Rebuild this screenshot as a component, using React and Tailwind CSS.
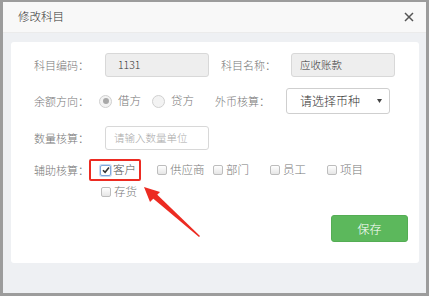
const Checkbox = ({ checked }) =>
  checked ? (
    <span className="w-[11px] h-[11px] flex items-center justify-center border border-[#7fa7dc] rounded-[2px] bg-white shadow-[0_0_0_1px_#c9dbf3]">
      <svg width="8" height="8" viewBox="0 0 8 8">
        <path d="M1 4.2 L3.1 6.3 L7 1.5" fill="none" stroke="#333" strokeWidth="1.6" />
      </svg>
    </span>
  ) : (
    <span className="w-[10px] h-[10px] border border-[#bdbdbd] rounded-[2px] bg-gradient-to-b from-white to-[#e6e6e6]"></span>
  );

const Radio = ({ checked }) => (
  <span className="w-[13px] h-[13px] rounded-full border border-[#d0d0d0] bg-[#f3f3f3] flex items-center justify-center">
    {checked && <span className="w-[6px] h-[6px] rounded-full bg-[#a8a8a8]"></span>}
  </span>
);

const items = ["供应商", "部门", "员工", "项目"];
const itemWidths = ["w-[56px]", "w-[57px]", "w-[57px]", "w-[57px]"];

export default function App() {
  return (
    <div className="relative w-[429px] h-[296px] bg-[#9c9c9c] pl-[3px] pt-[2px] pr-[3px] pb-[3px] font-['Noto_Sans_CJK_SC','Liberation_Sans',sans-serif] font-light overflow-hidden">
      <div className="flex flex-col h-full">
        <div className="h-[31px] shrink-0 flex items-center justify-between pl-[15px] pr-[12px] bg-[#f8f8f8] border-b border-[#ebebeb]">
          <span className="text-[11.5px] text-[#333] leading-none">修改科目</span>
          <svg width="10" height="10" viewBox="0 0 10 10">
            <path d="M1 1 L9 9 M9 1 L1 9" stroke="#555" strokeWidth="1.5" />
          </svg>
        </div>
        <div className="flex-1 bg-[#eef0f3] pt-[9px] pl-[8px] pr-[7px] pb-[30px]">
          <div className="h-full bg-white rounded-[3px] pl-[23px] pt-[11px] text-[11px] text-[#777] flex flex-col">
            <div className="flex items-center h-[24px]">
              <span className="w-[71px] leading-none">科目编码：</span>
              <div className="w-[104px] h-[24px] bg-[#eeeeee] border border-[#d8d8d8] rounded-[3px] flex items-center pl-[12px] text-[10.5px] text-[#333]">
                1131
              </div>
              <span className="ml-[12px] w-[70px] leading-none">科目名称：</span>
              <div className="w-[104px] h-[24px] bg-[#eeeeee] border border-[#d8d8d8] rounded-[3px] flex items-center pl-[8px] text-[10.5px] text-[#333]">
                应收账款
              </div>
            </div>

            <div className="flex items-center h-[26px] mt-[11px]">
              <span className="w-[65px] leading-none">余额方向：</span>
              <div className="w-[116px] flex items-center">
                <Radio checked />
                <span className="ml-[6px] leading-none text-[11.5px]">借方</span>
                <span className="ml-[11px]">
                  <Radio />
                </span>
                <span className="ml-[6px] leading-none text-[11.5px]">贷方</span>
              </div>
              <span className="w-[71px] leading-none">外币核算：</span>
              <div className="w-[104px] h-[26px] bg-white border border-[#cfcfcf] rounded-[3px] flex items-center justify-between pl-[13px] pr-[7px] text-[12px] text-[#333]">
                <span className="leading-none">请选择币种</span>
                <svg width="5" height="4" viewBox="0 0 5 4">
                  <path d="M0 0 L5 0 L2.5 4 Z" fill="#444" />
                </svg>
              </div>
            </div>

            <div className="flex items-center h-[24px] mt-[12px]">
              <span className="w-[71px] leading-none">数量核算：</span>
              <div className="w-[104px] h-[24px] bg-white border border-[#d8d8d8] rounded-[3px] flex items-center pl-[8px] text-[10.5px] text-[#aaa]">
                请输入数量单位
              </div>
            </div>

            <div className="flex items-center h-[22px] mt-[9px]">
              <span className="w-[55px] leading-none">辅助核算：</span>
              <div className="w-[52px] h-[22px] border-2 border-[#ec2b22] rounded-[2px] flex items-center pl-[9px]">
                <Checkbox checked />
                <span className="ml-[2px] leading-none text-[11.5px] text-[#555]">客户</span>
              </div>
              <div className="ml-[16px] flex items-center">
                {items.map((t, i) => (
                  <div key={t} className={`${itemWidths[i]} flex items-center`}>
                    <Checkbox />
                    <span className="ml-[3px] leading-none text-[11.5px]">{t}</span>
                  </div>
                ))}
              </div>
            </div>

            <div className="flex items-center h-[14px] mt-[4px] ml-[67px]">
              <Checkbox />
              <span className="ml-[3px] leading-none text-[11.5px]">存货</span>
            </div>

            <div className="flex justify-end pr-[11px] mt-[16px]">
              <button className="w-[77px] h-[27px] bg-[#5cb85c] border border-[#54ad54] rounded-[3px] text-white text-[12px] leading-none">
                保存
              </button>
            </div>
          </div>
        </div>
      </div>

      <svg className="absolute left-0 top-0 pointer-events-none" width="429" height="296" viewBox="0 0 429 296">
        <polygon points="199,237 200,236 156.5,194 152.5,198" fill="#ec2b22" />
        <polygon points="144,187 160,192 150,202" fill="#ec2b22" />
      </svg>
    </div>
  );
}
